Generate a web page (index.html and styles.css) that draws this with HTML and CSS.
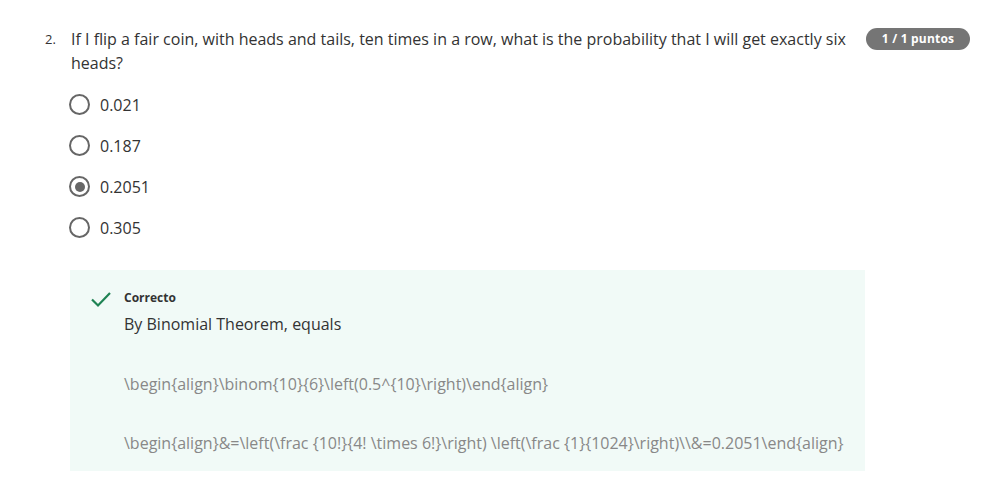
FILE: index.html
```html
<!DOCTYPE html>
<html>
<head>
<meta charset="utf-8">
<link rel="stylesheet" href="styles.css">
</head>
<body>
<div class="question">
  <div class="head">
    <div class="num">2.</div>
    <div class="qtext">If I flip a fair coin, with heads and tails, ten times in a row, what is the probability that I will get exactly six heads?</div>
    <div class="badge-wrap"><span class="badge">1 / 1 puntos</span></div>
  </div>
  <ul class="options">
    <li class="opt"><span class="radio"></span><span>0.021</span></li>
    <li class="opt"><span class="radio"></span><span>0.187</span></li>
    <li class="opt"><span class="radio checked"></span><span>0.2051</span></li>
    <li class="opt"><span class="radio"></span><span>0.305</span></li>
  </ul>
  <div class="feedback">
    <svg class="check" width="22" height="18" viewBox="0 0 22 18"><path d="M2 9.5 L8 15.5 L20 3" fill="none" stroke="#1f8354" stroke-width="2.2"/></svg>
    <div class="fb-body">
      <div class="fb-title">Correcto</div>
      <div class="fb-text">By Binomial Theorem, equals</div>
      <div class="latex">\begin{align}\binom{10}{6}\left(0.5^{10}\right)\end{align}</div>
      <div class="latex">\begin{align}&amp;=\left(\frac {10!}{4! \times 6!}\right) \left(\frac {1}{1024}\right)\\&amp;=0.2051\end{align}</div>
    </div>
  </div>
</div>
</body>
</html>
```
FILE: styles.css
```css
html, body { margin: 0; padding: 0; background: #fff; }
body { font-family: "Open Sans", sans-serif; color: #333; }
.question { padding: 27px 27px 0 45px; }
.head { display: flex; align-items: flex-start; }
.num { width: 26px; font-size: 13px; line-height: 24px; color: #333; }
.qtext { width: 780px; font-size: 16px; line-height: 24px; color: #333; }
.badge-wrap { flex: 1; display: flex; justify-content: flex-end; padding-top: 1px; }
.badge { background: #757575; color: #fff; font-size: 12px; font-weight: 700; border-radius: 11px; height: 22px; line-height: 22px; width: 104px; text-align: center; letter-spacing: 0.2px; }
.options { list-style: none; margin: 9px 0 0 24px; padding: 0; }
.opt { display: flex; align-items: center; height: 41px; font-size: 16px; color: #333; }
.radio { width: 17px; height: 17px; border: 2px solid #666; border-radius: 50%; box-sizing: content-box; margin-right: 10px; position: relative; }
.radio.checked::after { content: ""; position: absolute; left: 3.5px; top: 3.5px; width: 10px; height: 10px; border-radius: 50%; background: #666; }
.feedback { margin: 22px 0 0 25px; width: 795px; height: 201px; background: #f1faf7; box-sizing: border-box; padding: 19px 0 0 20px; display: flex; align-items: flex-start; }
.check { margin-top: 1px; margin-right: 12px; }
.fb-title { font-size: 12px; font-weight: 700; color: #333; line-height: 18px; }
.fb-text { font-size: 16px; line-height: 24px; margin-top: 5px; color: #333; }
.latex { font-size: 16px; line-height: 24px; color: #888; margin-top: 36px; }
.latex + .latex { margin-top: 35px; }
```
